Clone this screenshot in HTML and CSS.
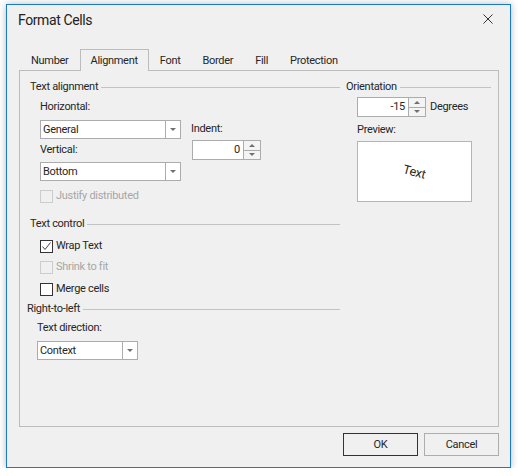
FILE: index.html
```html
<!DOCTYPE html>
<html>
<head>
<meta charset="utf-8">
<link rel="stylesheet" href="styles.css">
</head>
<body>
<div class="window">
  <div class="titlebar">
    <span class="title">Format Cells</span>
    <span class="close"><svg width="10" height="10" viewBox="0 0 10 10"><path d="M0.5 0.5 L9.5 9.5 M9.5 0.5 L0.5 9.5" stroke="#333" stroke-width="1" fill="none"/></svg></span>
  </div>
  <div class="tabs">
    <div class="tab">Number</div>
    <div class="tab active">Alignment</div>
    <div class="tab">Font</div>
    <div class="tab">Border</div>
    <div class="tab">Fill</div>
    <div class="tab">Protection</div>
  </div>
  <div class="panel">
    <div class="col-left">
      <div class="group-header ta">Text alignment</div>
      <div class="align-grid">
        <div class="align-main">
          <div class="label">Horizontal:</div>
          <div class="combo combo-h"><span class="combo-text">General</span><span class="combo-btn"><i class="tri-down"></i></span></div>
          <div class="label vert">Vertical:</div>
          <div class="combo combo-v"><span class="combo-text">Bottom</span><span class="combo-btn"><i class="tri-down"></i></span></div>
        </div>
        <div class="align-side">
          <div class="label">Indent:</div>
          <div class="spin spin-indent"><span class="spin-text">0</span><span class="spin-btns"><span class="spin-up"><i class="tri-up"></i></span><span class="spin-down"><i class="tri-down"></i></span></span></div>
        </div>
      </div>
      <div class="check-row disabled justify"><span class="box"></span><span>Justify distributed</span></div>
      <div class="group-header tc">Text control</div>
      <div class="check-row wrap"><span class="box"><svg width="11" height="11" viewBox="0 0 11 11"><path d="M1.5 5.5 L4 8.5 L9.5 1.5" stroke="#444" stroke-width="1" fill="none"/></svg></span><span>Wrap Text</span></div>
      <div class="check-row disabled shrink"><span class="box"></span><span>Shrink to fit</span></div>
      <div class="check-row merge"><span class="box"></span><span>Merge cells</span></div>
      <div class="group-header rtl">Right-to-left</div>
      <div class="label tdir">Text direction:</div>
      <div class="combo combo-ctx"><span class="combo-text">Context</span><span class="combo-btn"><i class="tri-down"></i></span></div>
    </div>
    <div class="col-right">
      <div class="group-header">Orientation</div>
      <div class="deg-row">
        <div class="spin spin-deg"><span class="spin-text">-15</span><span class="spin-btns"><span class="spin-up"><i class="tri-up"></i></span><span class="spin-down"><i class="tri-down"></i></span></span></div>
        <span class="deg-label">Degrees</span>
      </div>
      <div class="label prev-label">Preview:</div>
      <div class="preview"><span class="preview-text">Text</span></div>
    </div>
  </div>
  <div class="footer">
    <button class="btn btn-default">OK</button>
    <button class="btn">Cancel</button>
  </div>
</div>
</body>
</html>
```
FILE: styles.css
```css
html, body {
  margin: 0;
  padding: 0;
  background: #ffffff;
}
body {
  font-family: Roboto, "Noto Sans", sans-serif;
  font-size: 11px;
  letter-spacing: -0.3px;
  line-height: 14px;
  color: #262626;
}
.window {
  margin: 4px 0 0 6px;
  width: 505px;
  height: 464px;
  box-sizing: border-box;
  border: 1px solid #1979ca;
  background: #f0f0f0;
  box-shadow: 0 0 7px rgba(0, 0, 0, 0.28);
  display: flex;
  flex-direction: column;
}
.titlebar {
  height: 44px;
  display: flex;
  justify-content: space-between;
  align-items: flex-start;
  padding: 0 17px 0 11px;
  box-sizing: border-box;
}
.title {
  margin-top: 6px;
  font-size: 14px;
  letter-spacing: -0.4px;
  line-height: 18px;
  color: #222222;
}
.close {
  margin-top: 9px;
  width: 10px;
  height: 10px;
  display: block;
}
.close svg { display: block; }
.tabs {
  height: 21px;
  display: flex;
  align-items: flex-start;
  padding-left: 12px;
}
.tab {
  height: 22px;
  box-sizing: border-box;
  border: 1px solid transparent;
  border-bottom: none;
  padding: 0 10px;
  line-height: 21px;
  margin-bottom: -1px;
  position: relative;
  z-index: 1;
}
.tab:first-child { padding-left: 11px; }
.tab.active {
  border-color: #bcbcbc;
  background: #f0f0f0;
}
.panel {
  margin-left: 12px;
  width: 480px;
  height: 357px;
  box-sizing: border-box;
  border: 1px solid #bcbcbc;
  padding-top: 9px;
  display: grid;
  grid-template-columns: 320px 145px;
  column-gap: 6px;
  align-items: start;
}
.group-header {
  display: flex;
  align-items: center;
  height: 14px;
  white-space: nowrap;
}
.group-header::after {
  content: "";
  flex: 1;
  height: 1px;
  background: #c3c3c3;
  margin-left: 3px;
}
.group-header.ta { padding-left: 10px; }
.group-header.tc { padding-left: 10px; margin-top: 14px; }
.group-header.rtl { padding-left: 7px; margin-top: 6px; }
.label { height: 14px; white-space: nowrap; }
.align-grid {
  display: flex;
  margin-top: 6px;
  padding-left: 20px;
  column-gap: 10px;
}
.align-main { width: 141px; }
.combo {
  height: 19px;
  box-sizing: border-box;
  border: 1px solid #acacac;
  background: #ffffff;
  display: flex;
  align-items: stretch;
}
.combo-h { margin-top: 6px; }
.label.vert { margin-top: 4px; }
.combo-v { margin-top: 5px; }
.combo-text {
  flex: 1;
  padding-left: 2px;
  line-height: 17px;
}
.combo-btn {
  width: 14px;
  border-left: 1px solid #acacac;
  display: flex;
  align-items: center;
  justify-content: center;
  background: #ffffff;
}
.tri-down {
  width: 0;
  height: 0;
  border-left: 3px solid transparent;
  border-right: 3px solid transparent;
  border-top: 3px solid #707070;
  display: block;
}
.tri-up {
  width: 0;
  height: 0;
  border-left: 3px solid transparent;
  border-right: 3px solid transparent;
  border-bottom: 3px solid #707070;
  display: block;
}
.align-side { padding-top: 22px; }
.spin {
  height: 20px;
  width: 69px;
  box-sizing: border-box;
  border: 1px solid #acacac;
  background: #ffffff;
  display: flex;
}
.spin-indent { margin-top: 4px; margin-left: 1px; }
.spin-text {
  flex: 1;
  text-align: right;
  padding-right: 3px;
  line-height: 18px;
}
.spin-btns {
  width: 16px;
  border-left: 1px solid #acacac;
  display: flex;
  flex-direction: column;
  background: #f4f4f4;
}
.spin-up, .spin-down {
  flex: 1;
  display: flex;
  align-items: center;
  justify-content: center;
}
.spin-up { border-bottom: 1px solid #acacac; }
.check-row {
  display: flex;
  align-items: center;
  height: 14px;
  padding-left: 20px;
  column-gap: 3px;
  white-space: nowrap;
}
.check-row .box {
  width: 13px;
  height: 13px;
  box-sizing: border-box;
  border: 1px solid #333333;
  background: #ffffff;
  display: flex;
  align-items: center;
  justify-content: center;
}
.check-row .box svg { display: block; }
.check-row.disabled { color: #a6a6a6; }
.check-row.disabled .box {
  border-color: #cccccc;
  background: #f0f0f0;
}
.justify { margin-top: 8px; }
.wrap { margin-top: 8px; }
.shrink { margin-top: 7px; }
.merge { margin-top: 8px; }
.label.tdir { margin-top: 5px; padding-left: 17px; }
.combo-ctx { margin-top: 6px; margin-left: 17px; width: 101px; }
.deg-row {
  display: flex;
  align-items: center;
  margin-top: 3px;
  padding-left: 11px;
  column-gap: 4px;
}
.prev-label { margin-top: 6px; padding-left: 11px; }
.preview {
  margin-top: 4px;
  margin-left: 11px;
  width: 115px;
  height: 61px;
  box-sizing: border-box;
  border: 1px solid #b5b5b5;
  background: #ffffff;
  display: flex;
  align-items: center;
  justify-content: center;
}
.preview-text {
  display: block;
  font-size: 12.5px;
  transform: rotate(15deg);
}
.footer {
  display: flex;
  justify-content: flex-end;
  column-gap: 6px;
  margin-top: 6px;
  padding-right: 11px;
}
.btn {
  width: 75px;
  height: 23px;
  box-sizing: border-box;
  border: 1px solid #adadad;
  background: #f0f0f0;
  font-family: inherit;
  font-size: 11px;
  letter-spacing: -0.3px;
  color: #262626;
  padding: 0;
}
.btn-default { border-color: #333333; }
```
